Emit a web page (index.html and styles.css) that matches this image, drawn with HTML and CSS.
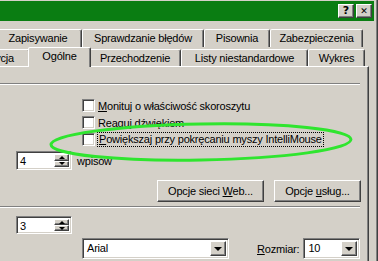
FILE: index.html
```html
<!DOCTYPE html>
<html lang="pl">
<head>
  <meta charset="UTF-8">
  <title>Opcje</title>
  <link rel="stylesheet" href="styles.css">
</head>
<body>
  <div class="window">
    <div class="titlebar">
      <span class="cap-btn">?</span>
      <span class="cap-btn cap-close">&#x2715;</span>
    </div>

    <div class="tabs">
      <div class="tab-row back">
        <div class="tab t-zap">Zapisywanie</div>
        <div class="tab t-spr">Sprawdzanie błędów</div>
        <div class="tab t-pis">Pisownia</div>
        <div class="tab t-zab">Zabezpieczenia</div>
      </div>
      <div class="tab-row front">
        <div class="tab t-edy">Edycja</div>
        <div class="tab t-ogo active">Ogólne</div>
        <div class="tab t-prz">Przechodzenie</div>
        <div class="tab t-lis">Listy niestandardowe</div>
        <div class="tab t-wyk">Wykres</div>
      </div>
    </div>

    <div class="panel">
      <div class="etched first"></div>

      <div class="checks">
        <label class="check"><span class="box"></span><span><u>M</u>onituj o właściwość skoroszytu</span></label>
        <label class="check"><span class="box"></span><span>Rea<u>g</u>uj dźwiękiem</span></label>
        <label class="check"><span class="box"></span><span class="focus"><u>P</u>owiększaj przy pokręcaniu myszy IntelliMouse</span></label>
      </div>

      <div class="spin-row">
        <div class="spin"><span class="spin-val">4</span><span class="spin-btns"><span class="sb up"></span><span class="sb down"></span></span></div>
        <span class="spin-label">wpisów</span>
      </div>

      <div class="btn-row">
        <button class="btn web">Opcje sieci <u>W</u>eb...</button>
        <button class="btn svc">Opcje <u>u</u>sług...</button>
      </div>

      <div class="etched"></div>

      <div class="spin-row second">
        <div class="spin"><span class="spin-val">3</span><span class="spin-btns"><span class="sb up"></span><span class="sb down"></span></span></div>
      </div>

      <div class="font-row">
        <div class="combo font"><span class="combo-val">Arial</span><span class="drop"></span></div>
        <span class="size-label"><u>R</u>ozmiar:</span>
        <div class="combo size"><span class="combo-val">10</span><span class="drop"></span></div>
      </div>
    </div>
  </div>

  <!-- zaznaczenie -->
  <svg class="mark" width="378" height="261" viewBox="0 0 378 261">
    <ellipse cx="201" cy="142" rx="150" ry="18" transform="rotate(-1 201 142)" fill="none" stroke="#2fe52f" stroke-width="3"/>
  </svg>
</body>
</html>
```

FILE: styles.css
```css
body {
  margin: 0;
  width: 378px;
  height: 261px;
  overflow: hidden;
  background: #d4d0c8;
  font-family: "Liberation Sans", Arial, sans-serif;
  font-size: 11px;
  letter-spacing: -0.2px;
  color: #000;
}
u { text-decoration-thickness: 1px; text-underline-offset: 1px; }

.window {
  width: 378px;
  height: 261px;
  box-sizing: border-box;
  padding-top: 1px;
  border-right: 1px solid #404040;
  box-shadow: inset -1px 0 #808080;
  overflow: hidden;
}

.titlebar {
  height: 20px;
  margin-right: 3px;
  background: #0a7d12;
  display: flex;
  justify-content: flex-end;
  align-items: flex-start;
  padding: 3px 2px 0 0;
  box-sizing: border-box;
  gap: 2px;
}
.cap-btn {
  width: 16px;
  height: 14px;
  box-sizing: border-box;
  background: #d4d0c8;
  border: 1px solid;
  border-color: #fff #404040 #404040 #fff;
  box-shadow: inset -1px -1px #808080;
  font: bold 11px "DejaVu Sans", sans-serif;
  letter-spacing: 0;
  line-height: 12px;
  text-align: center;
}
.cap-close { font-size: 9px; }

/* zakładki */
.tabs { padding-top: 8px; }
.tab-row { display: flex; }
.tab {
  box-sizing: border-box;
  height: 18px;
  border: 1px solid;
  border-bottom: 0;
  border-color: #fff #404040 transparent #fff;
  box-shadow: inset -1px 0 #808080;
  border-radius: 2px 2px 0 0;
  text-align: center;
  line-height: 16px;
  background: #d4d0c8;
  flex: none;
}
.back { margin-left: -6px; height: 18px; }
.front { height: 19px; }
.front .tab { margin-top: 2px; height: 17px; }
.front .tab.active {
  margin: 0 -2px;
  height: 20px;
  position: relative;
  z-index: 1;
  line-height: 17px;
}

.t-zap { width: 88px; }
.t-spr { width: 122px; }
.t-pis { width: 66px; }
.t-zab { width: 93px; }
.t-edy { width: 66px; margin-left: -36px; text-align: right; padding-right: 15px; }
.t-ogo { width: 63px; }
.t-prz { width: 92px; }
.t-lis { width: 127px; }
.t-wyk { width: 57px; }

/* strona */
.panel {
  width: 369px;
  height: 200px;
  box-sizing: border-box;
  border-top: 1px solid #fff;
  border-right: 1px solid #404040;
  box-shadow: inset -1px 0 #808080;
}
.etched {
  width: 360px;
  border-top: 1px solid #808080;
  border-bottom: 1px solid #fff;
}
.etched.first { margin-top: 16px; }

.checks { padding: 12px 0 0 82px; }
.check {
  display: flex;
  align-items: center;
  height: 17px;
  gap: 3px;
}
.box {
  width: 13px;
  height: 13px;
  box-sizing: border-box;
  background: #fff;
  border: 1px solid;
  border-color: #808080 #fff #fff #808080;
  box-shadow: inset 1px 1px #404040, inset -1px -1px #d4d0c8;
}
.focus {
  outline: 1px dotted #000;
  outline-offset: 0;
  padding: 0 1px;
  line-height: 13px;
}

.spin-row {
  display: flex;
  align-items: center;
  gap: 5px;
  margin: 3px 0 0 16px;
  height: 19px;
}
.spin {
  width: 56px;
  height: 19px;
  box-sizing: border-box;
  display: flex;
  background: #fff;
  border: 1px solid;
  border-color: #808080 #fff #fff #808080;
  box-shadow: inset 1px 1px #404040, inset -1px -1px #d4d0c8;
  padding: 2px;
}
.spin-val { flex: 1; line-height: 14px; padding-left: 1px; }
.spin-btns { width: 15px; display: flex; flex-direction: column; }
.sb {
  flex: 1;
  background: #d4d0c8;
  border: 1px solid;
  border-color: #fff #404040 #404040 #fff;
  box-shadow: inset -1px -1px #808080;
  display: flex;
  align-items: center;
  justify-content: center;
}
.sb::after {
  content: "";
  border-left: 3px solid transparent;
  border-right: 3px solid transparent;
}
.up::after { border-bottom: 3px solid #000; }
.down::after { border-top: 3px solid #000; }

.btn-row {
  display: flex;
  gap: 10px;
  margin: 10px 0 0 157px;
}
.btn {
  height: 22px;
  box-sizing: border-box;
  background: #d4d0c8;
  border: 1px solid;
  border-color: #fff #404040 #404040 #fff;
  box-shadow: inset -1px -1px #808080;
  font: inherit;
  letter-spacing: inherit;
  padding: 0;
}
.btn.web { width: 107px; }
.btn.svc { width: 87px; }
.btn-row + .etched { margin-top: 4px; }

.spin-row.second { margin-top: 8px; height: 18px; }
.second .spin { height: 18px; }

.font-row {
  display: flex;
  align-items: center;
  margin: 4px 0 0 82px;
}
.combo {
  height: 21px;
  box-sizing: border-box;
  display: flex;
  background: #fff;
  border: 1px solid;
  border-color: #808080 #fff #fff #808080;
  box-shadow: inset 1px 1px #404040, inset -1px -1px #d4d0c8;
  padding: 2px;
}
.combo.font { width: 147px; }
.combo.size { width: 57px; }
.combo-val { flex: 1; line-height: 15px; padding-left: 2px; }
.drop {
  width: 16px;
  background: #d4d0c8;
  border: 1px solid;
  border-color: #fff #404040 #404040 #fff;
  box-shadow: inset -1px -1px #808080;
  box-sizing: border-box;
  display: flex;
  align-items: center;
  justify-content: center;
}
.drop::after {
  content: "";
  border-left: 4px solid transparent;
  border-right: 4px solid transparent;
  border-top: 4px solid #000;
}
.size-label { margin: 0 4px 0 28px; }

.mark {
  position: absolute;
  left: 0;
  top: 0;
  pointer-events: none;
}
```
